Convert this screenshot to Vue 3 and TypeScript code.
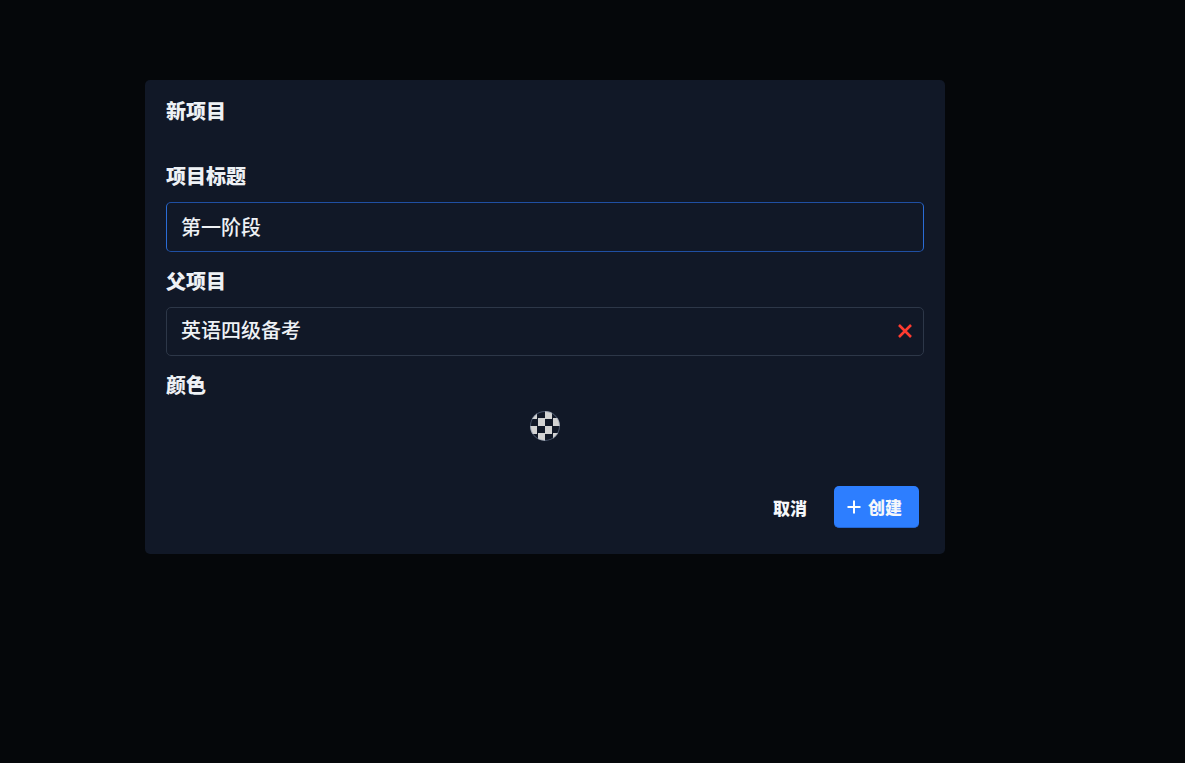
<script setup lang="ts">
const title = '第一阶段'
const parent = '英语四级备考'
</script>

<template>
  <div class="page">
    <section class="dialog">
      <h2 class="title">新项目</h2>
      <div class="form">
        <label class="label">项目标题</label>
        <div class="field focused"><span class="value">{{ title }}</span></div>
        <label class="label">父项目</label>
        <div class="field">
          <span class="value">{{ parent }}</span>
          <svg class="clear" width="14" height="14" viewBox="0 0 14 14" aria-hidden="true">
            <path d="M1 1 13 13M13 1 1 13" stroke="#ff3b30" stroke-width="2.6" fill="none" />
          </svg>
        </div>
        <label class="label">颜色</label>
        <div class="swatches"><span class="swatch"></span></div>
      </div>
      <div class="actions">
        <button class="btn ghost" type="button">取消</button>
        <button class="btn primary" type="button">
          <svg width="14" height="14" viewBox="0 0 14 14" aria-hidden="true">
            <path d="M7 0.5V13.5M0.5 7H13.5" stroke="#fff" stroke-width="2" fill="none" />
          </svg>
          创建
        </button>
      </div>
    </section>
  </div>
</template>

<style>
html, body { margin: 0; background: #05070a; }
</style>

<style scoped>
.page {
  width: 1185px;
  height: 763px;
  box-sizing: border-box;
  padding: 80px 0 0 145px;
  background: #05070a;
  font-family: Inter, "Noto Sans CJK SC", sans-serif;
  color: #eef1f5;
  overflow: hidden;
}
.dialog {
  width: 800px;
  height: 474px;
  box-sizing: border-box;
  padding: 17px 21px 0;
  background: #111827;
  border-radius: 5px;
  display: flex;
  flex-direction: column;
}
.title {
  margin: 0;
  font-size: 20px;
  line-height: 30px;
  font-weight: 800;
}
.form {
  margin-top: 35px;
  display: flex;
  flex-direction: column;
}
.label {
  font-size: 20px;
  line-height: 30px;
  font-weight: 800;
  height: 30px;
  margin-bottom: 10px;
}
.field {
  width: 758px;
  height: 49.6px;
  box-sizing: border-box;
  border: 1px solid #2d3748;
  border-radius: 5px;
  padding: 0 11px 0 14px;
  display: flex;
  align-items: center;
  justify-content: space-between;
  margin-bottom: 15px;
}
.field.focused {
  border-color: #1f4fa3 #2a6cd6;
  padding-top: 2px;
}
.value {
  font-size: 20px;
  line-height: 30px;
  font-weight: 500;
  color: #eef1f5;
}
.clear { flex: none; }
.swatches {
  display: flex;
  justify-content: center;
}
.swatch {
  width: 30px;
  height: 30px;
  box-sizing: border-box;
  border-radius: 50%;
  border: 1px solid rgba(120, 135, 160, 0.55);
  background-color: #111827;
  background-image: conic-gradient(#111827 25%, #d2d2d2 0 50%, #111827 0 75%, #d2d2d2 0);
  background-size: 15px 15px;
  background-origin: border-box;
  background-clip: border-box;
}
.actions {
  display: flex;
  justify-content: flex-end;
  align-items: center;
  gap: 10px;
  margin-top: 45px;
  padding-right: 5px;
}
.btn {
  height: 42px;
  border: 0;
  border-radius: 5px;
  font-family: inherit;
  font-size: 17px;
  font-weight: 800;
  color: #f5f7fa;
  display: inline-flex;
  align-items: center;
  justify-content: center;
  padding: 0 17px;
}
.ghost { background: transparent; }
.primary {
  background: #2d7eff;
  border-bottom: 1px solid #2466d0;
  padding: 0 17px 0 13px;
  gap: 7px;
}
</style>
